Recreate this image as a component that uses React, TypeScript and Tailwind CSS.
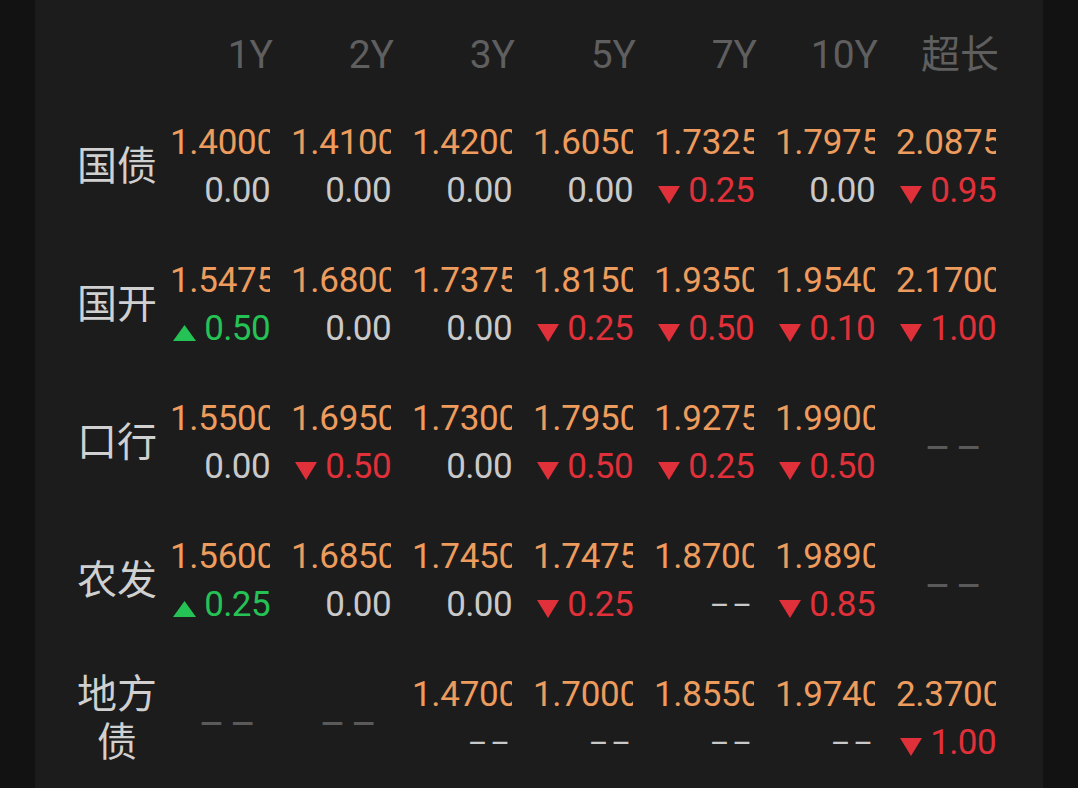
import React from 'react';

type Cell = { rate: string; change?: string; dir?: 'up' | 'down' } | null;

const headers = ['1Y', '2Y', '3Y', '5Y', '7Y', '10Y', '超长'];

const rows: { name: string[]; cells: Cell[] }[] = [
  {
    name: ['国债'],
    cells: [
      { rate: '1.4000', change: '0.00' },
      { rate: '1.4100', change: '0.00' },
      { rate: '1.4200', change: '0.00' },
      { rate: '1.6050', change: '0.00' },
      { rate: '1.7325', change: '0.25', dir: 'down' },
      { rate: '1.7975', change: '0.00' },
      { rate: '2.0875', change: '0.95', dir: 'down' },
    ],
  },
  {
    name: ['国开'],
    cells: [
      { rate: '1.5475', change: '0.50', dir: 'up' },
      { rate: '1.6800', change: '0.00' },
      { rate: '1.7375', change: '0.00' },
      { rate: '1.8150', change: '0.25', dir: 'down' },
      { rate: '1.9350', change: '0.50', dir: 'down' },
      { rate: '1.9540', change: '0.10', dir: 'down' },
      { rate: '2.1700', change: '1.00', dir: 'down' },
    ],
  },
  {
    name: ['口行'],
    cells: [
      { rate: '1.5500', change: '0.00' },
      { rate: '1.6950', change: '0.50', dir: 'down' },
      { rate: '1.7300', change: '0.00' },
      { rate: '1.7950', change: '0.50', dir: 'down' },
      { rate: '1.9275', change: '0.25', dir: 'down' },
      { rate: '1.9900', change: '0.50', dir: 'down' },
      null,
    ],
  },
  {
    name: ['农发'],
    cells: [
      { rate: '1.5600', change: '0.25', dir: 'up' },
      { rate: '1.6850', change: '0.00' },
      { rate: '1.7450', change: '0.00' },
      { rate: '1.7475', change: '0.25', dir: 'down' },
      { rate: '1.8700' },
      { rate: '1.9890', change: '0.85', dir: 'down' },
      null,
    ],
  },
  {
    name: ['地方', '债'],
    cells: [
      null,
      null,
      { rate: '1.4700' },
      { rate: '1.7000' },
      { rate: '1.8550' },
      { rate: '1.9740' },
      { rate: '2.3700', change: '1.00', dir: 'down' },
    ],
  },
];

const font = { fontFamily: 'Roboto, "Noto Sans CJK SC", sans-serif' };

const DownArrow = () => (
  <svg width="22" height="18" viewBox="0 0 22 18" className="shrink-0 mr-[8px] mb-[11px]">
    <polygon points="0,0 22,0 11,18" fill="#e0303a" />
  </svg>
);

const UpArrow = () => (
  <svg width="23" height="16" viewBox="0 0 23 16" className="shrink-0 mr-[8px] mb-[12px]">
    <polygon points="11.5,0 23,16 0,16" fill="#25c255" />
  </svg>
);

const RateCell = ({ cell }: { cell: Cell }) => {
  if (!cell) {
    return (
      <div className="w-[100px] h-[96px] flex items-center justify-end pr-[9px] pt-[12px]">
        <span className="text-[40px] leading-none tracking-[5px] text-[#5a5a5a]">––</span>
      </div>
    );
  }
  const color =
    cell.dir === 'down' ? 'text-[#e0303a]' : cell.dir === 'up' ? 'text-[#25c255]' : 'text-[#c9c9c9]';
  return (
    <div className="w-[100px] flex flex-col">
      <div className="h-[48px] leading-[48px] text-[35px] tracking-[-0.3px] text-[#ee9c5e] overflow-hidden whitespace-nowrap">
        {cell.rate}
      </div>
      <div className="h-[48px] flex items-end justify-end whitespace-nowrap">
        {cell.change ? (
          <>
            {cell.dir === 'down' && <DownArrow />}
            {cell.dir === 'up' && <UpArrow />}
            <span className={`shrink-0 leading-[48px] text-[35px] tracking-[-0.6px] ${color}`}>{cell.change}</span>
          </>
        ) : (
          <span className="leading-[48px] text-[30px] tracking-[3px] text-[#c9c9c9] mr-[-1px]">––</span>
        )}
      </div>
    </div>
  );
};

export default function App() {
  return (
    <div className="w-[1078px] h-[788px] bg-[#121212] overflow-hidden" style={font}>
      <div className="ml-[35px] w-[1008px] h-full bg-[#1c1c1c]">
        <div className="h-[98px] flex pt-[31px]">
          <div className="w-[138px]" />
          <div className="flex gap-[21px]">
            {headers.map((h) => (
              <div key={h} className="w-[100px] text-right text-[39px] leading-[48px] text-[#5f5f5f]">
                {h}
              </div>
            ))}
          </div>
        </div>
        {rows.map((row) => (
          <div key={row.name.join('')} className="h-[138px] flex items-center">
            <div className="ml-[42px] mr-[13px] w-[80px] flex flex-col items-center text-[40px] leading-[48px] text-[#d0d0d0]">
              {row.name.map((n) => (
                <span key={n}>{n}</span>
              ))}
            </div>
            <div className="flex gap-[21px]">
              {row.cells.map((c, i) => (
                <RateCell key={i} cell={c} />
              ))}
            </div>
          </div>
        ))}
      </div>
    </div>
  );
}
